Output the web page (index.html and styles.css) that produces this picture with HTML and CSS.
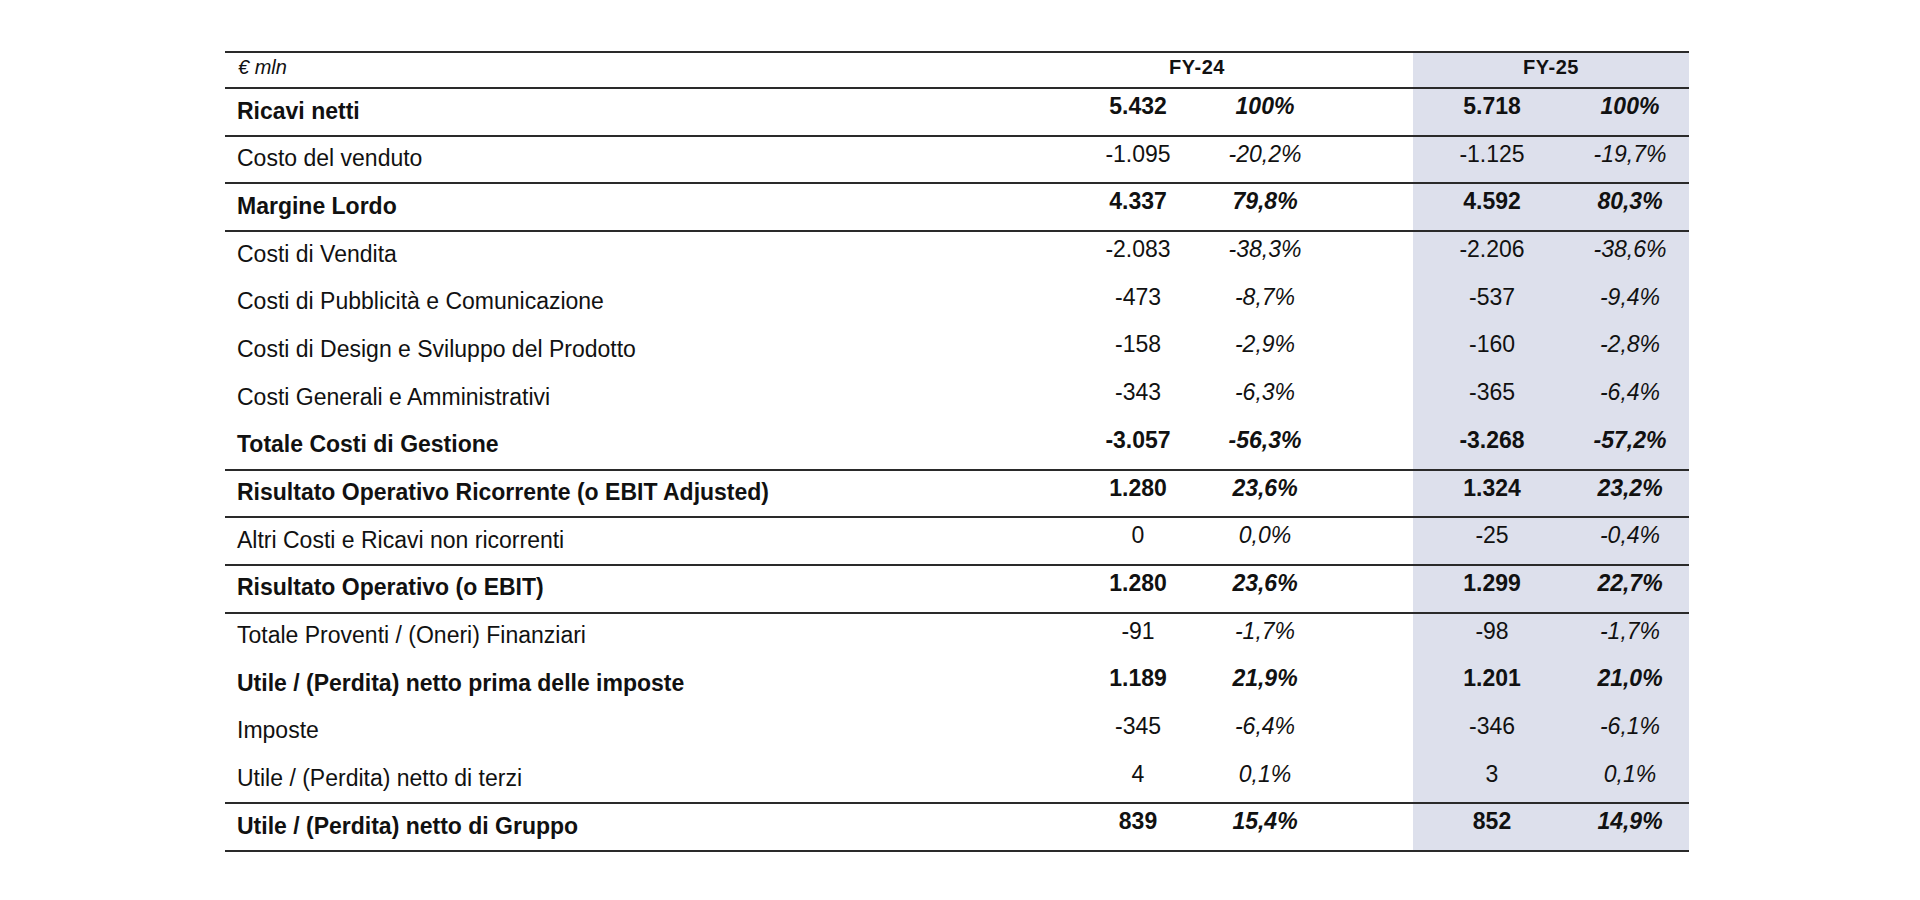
FILE: index.html
```html
<!DOCTYPE html>
<html lang="it">
<head>
<meta charset="utf-8">
<title>Conto economico</title>
<link rel="stylesheet" href="styles.css">
</head>
<body>
<div class="table">
  <div class="row head rule">
    <div class="lbl unit">€ mln</div>
    <div class="fy fy24">FY-24</div>
    <div class="gap"></div>
    <div class="fy fy25 shade">FY-25</div>
  </div>

  <div class="row bold rule">
    <div class="lbl">Ricavi netti</div>
    <div class="num">5.432</div><div class="pct">100%</div><div class="gap"></div><div class="gap"></div>
    <div class="num shade">5.718</div><div class="pct shade">100%</div>
  </div>
  <div class="row rule">
    <div class="lbl">Costo del venduto</div>
    <div class="num">-1.095</div><div class="pct">-20,2%</div><div class="gap"></div><div class="gap"></div>
    <div class="num shade">-1.125</div><div class="pct shade">-19,7%</div>
  </div>
  <div class="row bold rule">
    <div class="lbl">Margine Lordo</div>
    <div class="num">4.337</div><div class="pct">79,8%</div><div class="gap"></div><div class="gap"></div>
    <div class="num shade">4.592</div><div class="pct shade">80,3%</div>
  </div>
  <div class="row">
    <div class="lbl">Costi di Vendita</div>
    <div class="num">-2.083</div><div class="pct">-38,3%</div><div class="gap"></div><div class="gap"></div>
    <div class="num shade">-2.206</div><div class="pct shade">-38,6%</div>
  </div>
  <div class="row">
    <div class="lbl">Costi di Pubblicità e Comunicazione</div>
    <div class="num">-473</div><div class="pct">-8,7%</div><div class="gap"></div><div class="gap"></div>
    <div class="num shade">-537</div><div class="pct shade">-9,4%</div>
  </div>
  <div class="row">
    <div class="lbl">Costi di Design e Sviluppo del Prodotto</div>
    <div class="num">-158</div><div class="pct">-2,9%</div><div class="gap"></div><div class="gap"></div>
    <div class="num shade">-160</div><div class="pct shade">-2,8%</div>
  </div>
  <div class="row">
    <div class="lbl">Costi Generali e Amministrativi</div>
    <div class="num">-343</div><div class="pct">-6,3%</div><div class="gap"></div><div class="gap"></div>
    <div class="num shade">-365</div><div class="pct shade">-6,4%</div>
  </div>
  <div class="row bold rule">
    <div class="lbl">Totale Costi di Gestione</div>
    <div class="num">-3.057</div><div class="pct">-56,3%</div><div class="gap"></div><div class="gap"></div>
    <div class="num shade">-3.268</div><div class="pct shade">-57,2%</div>
  </div>
  <div class="row bold rule">
    <div class="lbl">Risultato Operativo Ricorrente (o EBIT Adjusted)</div>
    <div class="num">1.280</div><div class="pct">23,6%</div><div class="gap"></div><div class="gap"></div>
    <div class="num shade">1.324</div><div class="pct shade">23,2%</div>
  </div>
  <div class="row rule">
    <div class="lbl">Altri Costi e Ricavi non ricorrenti</div>
    <div class="num">0</div><div class="pct">0,0%</div><div class="gap"></div><div class="gap"></div>
    <div class="num shade">-25</div><div class="pct shade">-0,4%</div>
  </div>
  <div class="row bold rule">
    <div class="lbl">Risultato Operativo (o EBIT)</div>
    <div class="num">1.280</div><div class="pct">23,6%</div><div class="gap"></div><div class="gap"></div>
    <div class="num shade">1.299</div><div class="pct shade">22,7%</div>
  </div>
  <div class="row">
    <div class="lbl">Totale Proventi / (Oneri) Finanziari</div>
    <div class="num">-91</div><div class="pct">-1,7%</div><div class="gap"></div><div class="gap"></div>
    <div class="num shade">-98</div><div class="pct shade">-1,7%</div>
  </div>
  <div class="row bold">
    <div class="lbl">Utile / (Perdita) netto prima delle imposte</div>
    <div class="num">1.189</div><div class="pct">21,9%</div><div class="gap"></div><div class="gap"></div>
    <div class="num shade">1.201</div><div class="pct shade">21,0%</div>
  </div>
  <div class="row">
    <div class="lbl">Imposte</div>
    <div class="num">-345</div><div class="pct">-6,4%</div><div class="gap"></div><div class="gap"></div>
    <div class="num shade">-346</div><div class="pct shade">-6,1%</div>
  </div>
  <div class="row rule">
    <div class="lbl">Utile / (Perdita) netto di terzi</div>
    <div class="num">4</div><div class="pct">0,1%</div><div class="gap"></div><div class="gap"></div>
    <div class="num shade">3</div><div class="pct shade">0,1%</div>
  </div>
  <div class="row bold rule">
    <div class="lbl">Utile / (Perdita) netto di Gruppo</div>
    <div class="num">839</div><div class="pct">15,4%</div><div class="gap"></div><div class="gap"></div>
    <div class="num shade">852</div><div class="pct shade">14,9%</div>
  </div>
</div>
</body>
</html>
```

FILE: styles.css
```css
html, body {
  margin: 0;
  padding: 0;
  background: #ffffff;
}

body {
  font-family: "Liberation Sans", Arial, sans-serif;
  color: #111111;
}

.table {
  margin: 51px 0 0 225px;
  width: 1464px;
}

.row {
  display: grid;
  grid-template-columns: 834px 158px 96px 22px 78px 158px 118px;
  height: 47.69px;
  box-sizing: border-box;
  font-size: 23px;
  line-height: 26px;
}

.row.rule {
  border-bottom: 2px solid #2a2a2a;
}

.row.head {
  height: 38px;
  border-top: 2px solid #2a2a2a;
  font-size: 20px;
  line-height: 22px;
}

.row.head .fy24 {
  grid-column: 2 / 5;
}

.row.head .gap {
  grid-column: 5 / 6;
}

.row.head .fy25 {
  grid-column: 6 / 8;
}

.shade {
  background: #dde0ec;
}

.lbl {
  padding: 8.5px 0 0 12px;
  white-space: nowrap;
}

.num,
.pct {
  padding-top: 4px;
  text-align: center;
}

.pct {
  font-style: italic;
}

.bold .lbl,
.bold .num,
.bold .pct {
  font-weight: bold;
}

.head .unit {
  font-style: italic;
  padding: 3px 0 0 13px;
}

.head .fy {
  font-weight: bold;
  text-align: center;
  padding-top: 3px;
  letter-spacing: 0.5px;
}
```
